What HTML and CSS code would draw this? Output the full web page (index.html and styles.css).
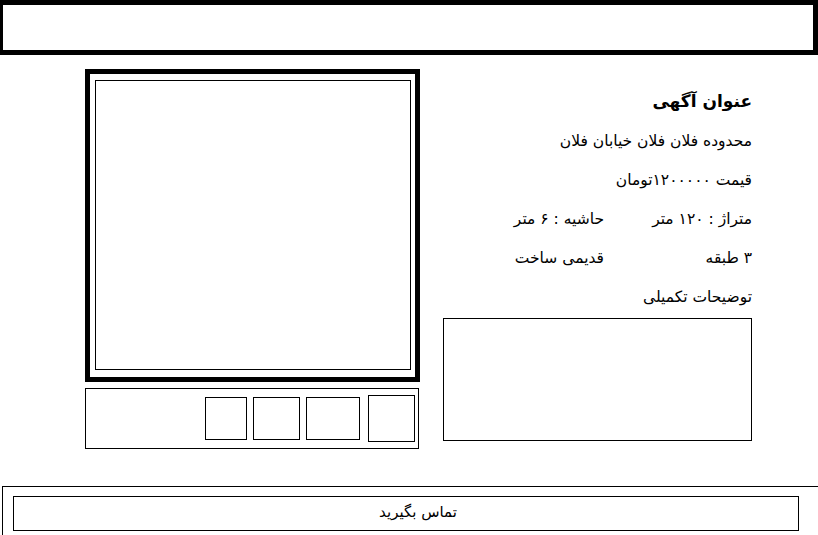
FILE: index.html
```html
<!DOCTYPE html>
<html lang="fa" dir="rtl">
<head>
<meta charset="utf-8">
<title>آگهی</title>
<link rel="stylesheet" href="styles.css">
</head>
<body>
<header class="topbar"></header>
<main class="content">
  <section class="info">
    <h1 class="title">عنوان آگهی</h1>
    <p class="line">محدوده فلان فلان خیابان فلان</p>
    <p class="line">قیمت <span class="digits">۱۲۰۰۰۰۰</span>تومان</p>
    <div class="specs">
      <span class="line">متراژ : ۱۲۰ متر</span>
      <span class="line">حاشیه : ۶ متر</span>
      <span class="line">۳ طبقه</span>
      <span class="line">قدیمی ساخت</span>
    </div>
    <p class="line">توضیحات تکمیلی</p>
    <div class="desc-box"></div>
  </section>
  <section class="gallery">
    <div class="photo">
      <div class="photo-inner"></div>
    </div>
    <div class="thumbs">
      <div class="thumb thumb-d"></div>
      <div class="thumb thumb-c"></div>
      <div class="thumb thumb-b"></div>
      <div class="thumb thumb-a"></div>
    </div>
  </section>
</main>
<footer class="contact">
  <div class="contact-btn">تماس بگیرید</div>
</footer>
</body>
</html>
```

FILE: styles.css
```css
html, body {
  margin: 0;
  padding: 0;
  overflow: hidden;
  background: #fff;
}
body {
  direction: rtl;
  font-family: "DejaVu Sans", sans-serif;
  font-size: 15px;
  color: #000;
  width: 818px;
  height: 535px;
}
.topbar {
  box-sizing: border-box;
  width: 820px;
  height: 55px;
  margin-left: -2px;
  border: 5px solid #000;
}
.content {
  display: flex;
  flex-direction: row;
  align-items: flex-start;
  gap: 23px;
  padding-right: 66px;
  margin-top: 14px;
}
.info {
  width: 309px;
  display: flex;
  flex-direction: column;
}
.title {
  margin: 15px 0 4px 0;
  font-size: 17px;
  font-weight: bold;
  line-height: 34px;
}
.line {
  margin: 0;
  line-height: 39px;
  font-size: 15.5px;
}
.digits {
  letter-spacing: 4px;
}
.specs {
  display: grid;
  grid-template-columns: 148px auto;
}
.desc-box {
  box-sizing: border-box;
  height: 123px;
  border: 1px solid #000;
  margin-top: 1px;
}
.gallery {
  width: 335px;
  display: flex;
  flex-direction: column;
  gap: 6px;
}
.photo {
  box-sizing: border-box;
  height: 313px;
  border: 5px solid #000;
  padding: 6px 4px 7px 5px;
}
.photo-inner {
  box-sizing: border-box;
  height: 290px;
  border: 1px solid #000;
}
.thumbs {
  box-sizing: border-box;
  height: 61px;
  width: 334px;
  margin-right: 1px;
  border: 1px solid #000;
  padding-right: 3px;
  display: flex;
  align-items: center;
}
.thumb {
  box-sizing: border-box;
  border: 1px solid #000;
  height: 43px;
}
.thumb-d { width: 47px; height: 47px; }
.thumb-c { width: 54px; margin-right: 8px; }
.thumb-b { width: 47px; margin-right: 6px; }
.thumb-a { width: 42px; margin-right: 6px; }
.contact {
  box-sizing: border-box;
  width: 830px;
  margin-right: -14px;
  margin-top: 37px;
  border: 1px solid #000;
  padding: 9px 0 10px 0;
}
.contact-btn {
  box-sizing: border-box;
  width: 786px;
  margin-right: 32px;
  height: 35px;
  border: 1px solid #000;
  padding-left: 24px;
  text-align: center;
  line-height: 31px;
  font-size: 15px;
}
```
